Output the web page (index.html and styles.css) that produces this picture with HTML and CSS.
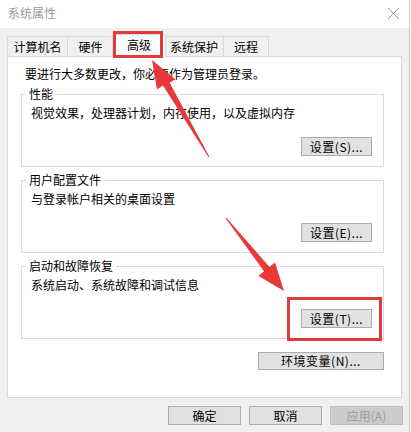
FILE: index.html
```html
<!DOCTYPE html>
<html lang="zh-CN">
<head>
<meta charset="utf-8">
<title>系统属性</title>
<link rel="stylesheet" href="styles.css">
</head>
<body>
<div class="window">
  <div class="titlebar">
    <span class="title">系统属性</span>
    <svg class="close" width="13" height="13" viewBox="0 0 13 13"><path d="M1 1 L12 12 M12 1 L1 12" stroke="#9a9a9a" stroke-width="1" fill="none"/></svg>
  </div>
  <div class="body">
    <div class="tabs">
      <div class="tab t1">计算机名</div>
      <div class="tab t2">硬件</div>
      <div class="tab active">高级</div>
      <div class="tab t4">系统保护</div>
      <div class="tab t5">远程</div>
    </div>
    <div class="panel">
      <p class="intro">要进行大多数更改，你必须作为管理员登录。</p>
      <fieldset class="group">
        <legend>性能</legend>
        <p class="desc">视觉效果，处理器计划，内存使用，以及虚拟内存</p>
        <div class="btnrow"><button class="btn set">设置(S)...</button></div>
      </fieldset>
      <fieldset class="group">
        <legend>用户配置文件</legend>
        <p class="desc">与登录帐户相关的桌面设置</p>
        <div class="btnrow"><button class="btn set">设置(E)...</button></div>
      </fieldset>
      <fieldset class="group">
        <legend>启动和故障恢复</legend>
        <p class="desc">系统启动、系统故障和调试信息</p>
        <div class="btnrow"><button class="btn set">设置(T)...</button></div>
      </fieldset>
      <div class="envrow"><button class="btn env">环境变量(N)...</button></div>
    </div>
    <div class="footer">
      <button class="btn foot">确定</button>
      <button class="btn foot">取消</button>
      <button class="btn foot disabled" disabled>应用(A)</button>
    </div>
  </div>
  <div class="mark mark-tab"></div>
  <div class="mark mark-btn"></div>
  <svg class="arrows" width="411" height="432" viewBox="0 0 411 432">
    <polygon fill="#e8383a" points="152,60 175.5,79.5 169.5,82.5 209.4,156.8 208.6,157.2 163,85.5 157,89.5"/>
    <polygon fill="#e8383a" points="284,291 275,262.5 269.5,267 226.4,217.7 225.6,218.3 264,271.2 258.5,276"/>
  </svg>
</div>
</body>
</html>
```

FILE: styles.css
```css
* { box-sizing: border-box; }
html, body { margin: 0; padding: 0; background: #ffffff; }
body {
  width: 411px;
  height: 432px;
  overflow: hidden;
  font-family: "Noto Sans CJK SC", "Noto Sans", sans-serif;
  font-size: 12px;
  color: #000;
}
.window {
  position: relative;
  width: 410px;
  height: 432px;
  border-right: 1px solid #c6c6c6;
  background: #f0f0f0;
}
.titlebar {
  height: 28px;
  background: #ffffff;
  display: flex;
  align-items: center;
  justify-content: space-between;
  padding: 0 9px 2px 8px;
}
.title {
  color: #9c9c9c;
  font-size: 12px;
  line-height: 16px;
}
.close { display: block; margin-top: 1px; }
.body {
  padding-top: 6px;
}
.tabs {
  display: flex;
  align-items: flex-end;
  height: 22px;
  padding-left: 7px;
}
.tab {
  height: 20px;
  border: 1px solid #d9d9d9;
  border-bottom: none;
  background: #f0f0f0;
  display: flex;
  align-items: center;
  justify-content: center;
  line-height: 16px;
  padding-top: 1px;
}
.t1 { width: 61px; }
.t2 { width: 47px; margin-left: -1px; }
.active {
  position: relative;
  z-index: 2;
  width: 54px;
  height: 23px;
  margin: 0 -2px -1px -2px;
  background: #ffffff;
  padding-top: 0;
  padding-bottom: 3px;
}
.t4 { width: 60px; }
.t5 { width: 46px; margin-left: -1px; }
.panel {
  position: relative;
  z-index: 1;
  margin-left: 7px;
  width: 395px;
  height: 342px;
  background: #ffffff;
  border: 1px solid #d9d9d9;
  padding-top: 9px;
}
.intro {
  margin: 0 0 4px 17px;
  line-height: 16px;
}
.group {
  margin: 0 0 5px 13px;
  width: 363px;
  border: 1px solid #dcdcdc;
  padding: 3px 11px 10px 4px;
  min-width: 0;
}
.group legend {
  padding: 0 3px;
  line-height: 16px;
}
.desc {
  margin: 0 0 0 5px;
  line-height: 16px;
}
.btnrow {
  display: flex;
  justify-content: flex-end;
  margin-top: 16px;
}
.btn {
  font-family: "Noto Sans CJK SC", "Noto Sans", sans-serif;
  font-size: 12px;
  color: #000;
  background: #e1e1e1;
  border: 1px solid #adadad;
  border-radius: 0;
  padding: 0;
  margin: 0;
  line-height: 16px;
  display: flex;
  align-items: center;
  justify-content: center;
}
.set { width: 71px; height: 19px; letter-spacing: 0.5px; }
.envrow {
  display: flex;
  justify-content: flex-end;
  width: 363px;
  margin: 13px 0 0 13px;
}
.env { width: 126px; height: 18px; letter-spacing: 0.5px; }
.footer {
  display: flex;
  justify-content: flex-end;
  gap: 8px;
  margin-top: 8px;
  padding-right: 6px;
}
.foot { width: 73px; height: 19px; }
.disabled {
  background: #cccccc;
  border-color: #bfbfbf;
  color: #9b9b9b;
}
.mark {
  position: absolute;
  border: 3px solid #e2393b;
  z-index: 5;
}
.mark-tab { left: 113px; top: 31px; width: 50px; height: 27px; }
.mark-btn { left: 287px; top: 297px; width: 95px; height: 44px; }
.arrows {
  position: absolute;
  left: 0;
  top: 0;
  z-index: 6;
}
```
